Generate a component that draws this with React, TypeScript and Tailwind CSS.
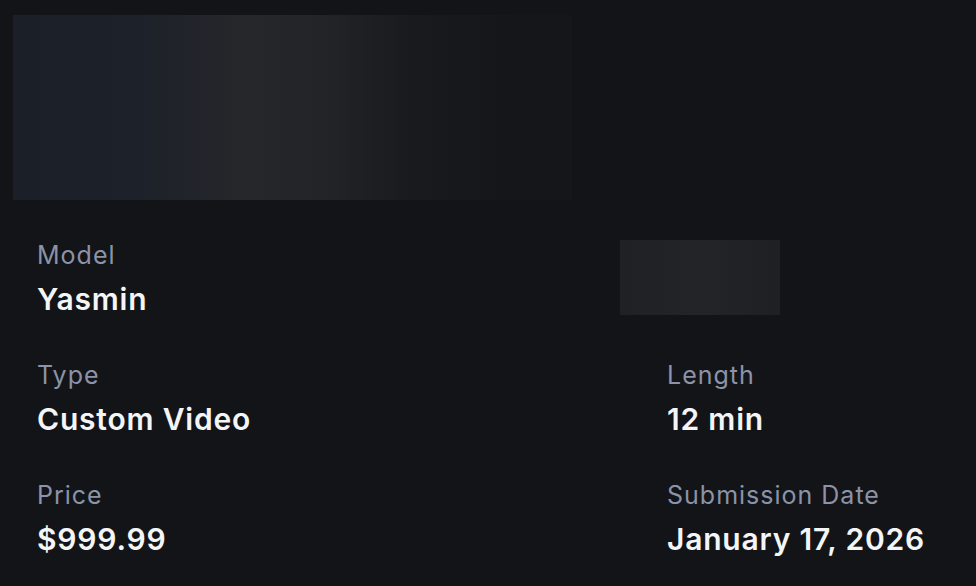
export default function App() {
  const label = 'text-[25px] leading-[32px] tracking-[1px] text-[#8a93a7]'
  const value = 'mt-[9px] text-[30px] font-semibold leading-[38px] tracking-[0.8px] text-[#f4f5f7]'

  return (
    <div className="min-h-screen bg-[#131418] px-[13px] pt-[15px] font-['Inter',sans-serif]">
      <div className="h-[185px] w-[559px] bg-[linear-gradient(90deg,#1b1f28_0%,#1d2129_22%,#25272b_42%,#222428_55%,#181a1e_72%,#141619_90%,#141619_100%)]" />

      <div className="mt-[39px] grid grid-cols-[583px_1fr] gap-y-[41px] pl-[24px]">
        <div>
          <div className={label}>Model</div>
          <div className={value}>Yasmin</div>
        </div>
        <div>
          <div className="mt-[1px] h-[75px] w-[160px] bg-[linear-gradient(90deg,#1f2125_0%,#222428_50%,#1e2024_100%)]" />
        </div>

        <div>
          <div className={label}>Type</div>
          <div className={value}>Custom Video</div>
        </div>
        <div className="pl-[47px]">
          <div className={label}>Length</div>
          <div className={value}>12 min</div>
        </div>

        <div>
          <div className={label}>Price</div>
          <div className={value}>$999.99</div>
        </div>
        <div className="pl-[47px]">
          <div className={label}>Submission Date</div>
          <div className={value}>January 17, 2026</div>
        </div>
      </div>
    </div>
  )
}
